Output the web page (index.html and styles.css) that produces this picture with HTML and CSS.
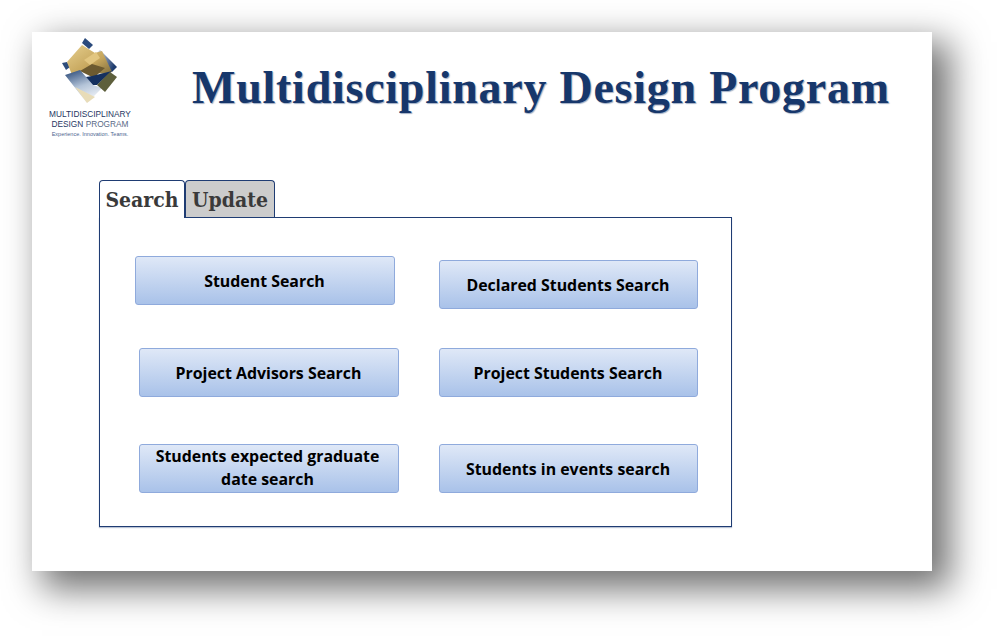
FILE: index.html
```html
<!DOCTYPE html>
<html>
<head>
	<title>Multidisciplinary Design Program</title>
	<link rel="stylesheet" href="styles.css">
</head>
<body>
	<div class="sheet">
		<div class="header">
			<div class="logo">
				<svg class="logo-mark" width="60" height="68" viewBox="0 0 60 68">
					<defs>
						<linearGradient id="gold" x1="0" y1="0" x2="1" y2="1">
							<stop offset="0" stop-color="#e6cf8f"/>
							<stop offset="0.6" stop-color="#c6a65c"/>
							<stop offset="1" stop-color="#7a6a3c"/>
						</linearGradient>
						<linearGradient id="pale" x1="0.2" y1="0" x2="0.6" y2="1">
							<stop offset="0" stop-color="#34527f"/>
							<stop offset="0.5" stop-color="#b4c4d8"/>
							<stop offset="1" stop-color="#f6f8fb"/>
						</linearGradient>
						<linearGradient id="edge" x1="0" y1="0" x2="1" y2="0.4">
							<stop offset="0" stop-color="#eef1f6"/>
							<stop offset="1" stop-color="#1f3c6e"/>
						</linearGradient>
					</defs>
					<polygon points="25,0 33,7 29,11 22,5" fill="#2b4a7c"/>
					<polygon points="40,12 57,29 52,34 35,17" fill="url(#edge)"/>
					<polygon points="2,25 7,24 10,29 6,32" fill="#2d4c7c"/>
					<polygon points="7,24 22,7 35,15 42,13 52,34 45,36 20,33 12,37" fill="url(#gold)"/>
					<polygon points="24,22 36,14 40,20 30,27" fill="#e2c680"/>
					<polygon points="20,33 32,26 45,30 38,36 34,40" fill="#6c5a30"/>
					<polygon points="5,37 20,32 33,47 42,50 27,65" fill="url(#pale)"/>
					<polygon points="32,38 52,33 37,47 33,47 26,39" fill="#14305f"/>
					<polygon points="37,47 50,34 57,39 45,54" fill="#5d5f3c"/>
					<polygon points="15,49 35,59 27,65" fill="#e8dcb8"/>
				</svg>
				<div class="logo-name">MULTIDISCIPLINARY</div>
				<div class="logo-name">DESIGN <span class="logo-light">PROGRAM</span></div>
				<div class="logo-tag">Experience. Innovation. Teams.</div>
			</div>
			<h1 class="title">Multidisciplinary Design Program</h1>
		</div>

		<div class="tabs">
			<div class="tab tab-active">Search</div>
			<div class="tab">Update</div>
		</div>
		<div class="tab-panel">
			<div class="button-row row-first">
				<div class="btn btn-raised">Student Search</div>
				<div class="btn">Declared Students Search</div>
			</div>
			<div class="button-row row-second">
				<div class="btn">Project Advisors Search</div>
				<div class="btn">Project Students Search</div>
			</div>
			<div class="button-row row-third">
				<div class="btn btn-wrapped">Students expected graduate date search</div>
				<div class="btn">Students in events search</div>
			</div>
		</div>
	</div>
</body>
</html>
```

FILE: styles.css
```css
html, body {
	margin: 0;
	padding: 0;
	background-color: #fff;
}

body {
	width: 997px;
	height: 636px;
	overflow: hidden;
	padding: 32px 0 0 32px;
	box-sizing: border-box;
}

.sheet {
	width: 900px;
	height: 539px;
	box-sizing: border-box;
	padding-left: 67px;
	background-color: #fff;
	box-shadow: 14px 14px 34px 4px rgba(0, 0, 0, 0.56);
}

.header {
	display: flex;
	height: 148px;
	margin-left: -67px;
}

.logo {
	width: 116px;
	padding-top: 6px;
	box-sizing: border-box;
	text-align: center;
	color: #1f3763;
	font-family: "Liberation Sans", sans-serif;
}

.logo-mark {
	display: block;
	margin: 0 0 3px 28px;
}

.logo-name {
	font-size: 8.3px;
	line-height: 10px;
	white-space: nowrap;
}

.logo-light {
	color: #5a6a86;
}

.logo-tag {
	font-size: 5.5px;
	line-height: 10px;
	white-space: nowrap;
	color: #4d6690;
}

.title {
	margin: 29px 0 0 44px;
	font-family: "Liberation Serif", serif;
	font-size: 46px;
	line-height: 54px;
	font-weight: bold;
	letter-spacing: 0.75px;
	white-space: nowrap;
	color: #17376b;
	text-shadow: 1px 1px 1px rgba(23, 55, 107, 0.4);
}

.tabs {
	display: flex;
	height: 37px;
}

.tab {
	width: 90px;
	height: 37px;
	box-sizing: border-box;
	border: 1px solid #1f3c73;
	border-bottom: 0;
	border-radius: 4px 4px 0 0;
	background-color: #cccccc;
	font-family: "DejaVu Serif Condensed", "DejaVu Serif", serif;
	font-size: 21px;
	font-weight: bold;
	line-height: 38px;
	text-align: center;
	color: #3a3a3a;
}

.tab-active {
	position: relative;
	z-index: 1;
	width: 86px;
	height: 38px;
	background-color: #fff;
}

.tab-panel {
	width: 633px;
	height: 310px;
	box-sizing: border-box;
	border: 1px solid #1f3c73;
	box-shadow: 0 1px 1px rgba(31, 60, 115, 0.3);
}

.button-row {
	display: flex;
	gap: 40px;
	margin-left: 39px;
}

.row-first {
	margin-top: 42px;
}

.row-second {
	margin-top: 39px;
}

.row-third {
	margin-top: 47px;
}

.btn {
	width: 260px;
	height: 49px;
	box-sizing: border-box;
	display: flex;
	align-items: center;
	justify-content: center;
	padding: 2px 11px 0 10px;
	border: 1px solid #8faadc;
	border-radius: 3px;
	background: linear-gradient(to bottom, #dfe8f7, #a9c2e9);
	font-family: "Open Sans", sans-serif;
	font-size: 15.9px;
	line-height: 23px;
	font-weight: bold;
	text-align: center;
	color: #000;
}

.button-row .btn:last-child {
	width: 259px;
}

.btn-raised {
	margin: -4px 4px 4px -4px;
}

.btn-wrapped {
	padding: 0 13px 2px 10px;
}
```
